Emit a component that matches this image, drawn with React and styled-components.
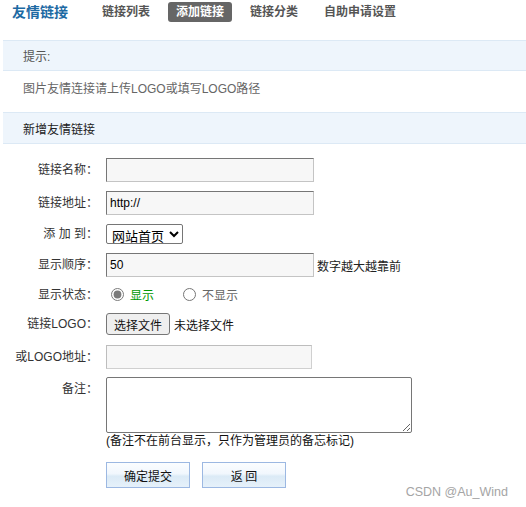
import React from "react";
import styled, { createGlobalStyle } from "styled-components";

const Global = createGlobalStyle`
  html, body { margin: 0; padding: 0; background: #fff; }
  body { font-family: "Liberation Sans", "Noto Sans CJK SC", sans-serif; font-size: 12px; color: #333; }
  * { box-sizing: border-box; }
`;

const Page = styled.div`
  position: relative;
  width: 526px;
  height: 507px;
  overflow: hidden;
`;

const Header = styled.div`
  display: flex;
  align-items: center;
  height: 24px;
  padding-left: 12px;
`;

const Title = styled.div`
  font-size: 14px;
  font-weight: bold;
  color: #1d6aa3;
  line-height: 20px;
  margin-right: 26px;
`;

const Tab = styled.div`
  height: 20px;
  line-height: 20px;
  padding: 0 8px;
  margin-right: 10px;
  border-radius: 3px;
  font-size: 12px;
  font-weight: bold;
  color: ${(p) => (p.$active ? "#fff" : "#555")};
  background: ${(p) => (p.$active ? "#666" : "transparent")};
`;

const Bar = styled.div`
  margin-left: 3px;
  margin-top: ${(p) => p.$mt || 0}px;
  height: ${(p) => p.$h}px;
  display: flex;
  align-items: center;
  padding-left: 20px;
  background: #eef5fc;
  border-top: 1px solid #dce9f5;
  border-bottom: 1px solid #dce9f5;
  color: ${(p) => p.$color || "#555"};
  font-size: 12px;
`;

const Hint = styled.div`
  height: 41px;
  padding: 11px 0 0 23px;
  line-height: 14px;
  color: #666;
  font-size: 12px;
`;

const Form = styled.form`
  display: flex;
  flex-direction: column;
  gap: 9px;
  margin-top: 14px;
`;

const Row = styled.div`
  display: flex;
  align-items: ${(p) => (p.$top ? "flex-start" : "center")};
  min-height: ${(p) => p.$h || 24}px;
`;

const Label = styled.div`
  width: 98px;
  flex: none;
  text-align: right;
  color: #333;
  font-size: 12px;
  line-height: 16px;
  padding-top: ${(p) => p.$pt || 0}px;
  margin-right: 8px;
  white-space: nowrap;
`;

const TextInput = styled.input`
  width: ${(p) => p.$w || 208}px;
  height: 24px;
  padding: 0 3px;
  font-family: "Liberation Sans", "Noto Sans CJK SC", sans-serif;
  font-size: 12px;
  color: #000;
  background: #f7f7f7;
  border: 1px solid;
  border-color: ${(p) => (p.$light ? "#bdbdbd #d0d0d0 #d0d0d0 #bdbdbd" : "#767676 #c4c4c4 #c4c4c4 #767676")};
  outline: none;
`;

const Select = styled.select`
  height: 20px;
  width: 77px;
  font-family: "Noto Sans CJK SC", sans-serif;
  font-size: 13px;
  color: #000;
  background: #fff;
  border: 1px solid #767676;
  border-radius: 2px;
  padding: 0 0 0 1px;
`;

const After = styled.span`
  margin-left: 3px;
  color: #222;
  font-size: 12px;
`;

const RadioLabel = styled.label`
  display: inline-flex;
  align-items: center;
  margin-right: ${(p) => p.$mr || 0}px;
  color: ${(p) => p.$color || "#666"};
  font-size: 12px;
  input {
    width: 13px;
    height: 13px;
    margin: 0 6px 0 5px;
    accent-color: #7a7a7a;
  }
`;

const FileBtn = styled.button`
  height: 22px;
  padding: 0 7px;
  font-family: "Noto Sans CJK SC", sans-serif;
  font-size: 12px;
  color: #111;
  background: #efefef;
  border: 1px solid #767676;
  border-radius: 3px;
`;

const FileNote = styled.span`
  margin-left: 4px;
  color: #111;
  font-size: 12px;
`;

const Column = styled.div`
  display: flex;
  flex-direction: column;
  margin-top: -1px;
`;

const TextArea = styled.textarea`
  width: 306px;
  height: 56px;
  border: 1px solid #767676;
  border-radius: 2px;
  resize: both;
  font-size: 12px;
`;

const Note = styled.div`
  margin-top: 1px;
  line-height: 14px;
  color: #111;
  font-size: 12px;
`;

const Buttons = styled.div`
  display: flex;
  gap: 12px;
  margin-left: 106px;
  margin-top: 5px;
`;

const Button = styled.button`
  width: 84px;
  height: 26px;
  font-family: "Noto Sans CJK SC", sans-serif;
  font-size: 12px;
  color: #111;
  border: 1px solid #9cb8e2;
  background: linear-gradient(#fbfdff 0%, #f1f7fd 45%, #dbeaf6 55%, #e6f1fa 100%);
  padding: 0;
`;

const Watermark = styled.div`
  position: absolute;
  right: 18px;
  bottom: 8px;
  font-family: "Liberation Sans", sans-serif;
  font-size: 12.5px;
  color: #a5a5a5;
`;

export default function App() {
  return (
    <Page>
      <Global />
      <Header>
        <Title>友情链接</Title>
        <Tab>链接列表</Tab>
        <Tab $active>添加链接</Tab>
        <Tab>链接分类</Tab>
        <Tab>自助申请设置</Tab>
      </Header>
      <Bar $mt={16} $h={31}>提示:</Bar>
      <Hint>图片友情连接请上传LOGO或填写LOGO路径</Hint>
      <Bar $h={32} $color="#222">新增友情链接</Bar>
      <Form onSubmit={(e) => e.preventDefault()}>
        <Row>
          <Label>链接名称：</Label>
          <TextInput />
        </Row>
        <Row>
          <Label>链接地址：</Label>
          <TextInput defaultValue="http://" />
        </Row>
        <Row $h={19}>
          <Label>添 加 到：</Label>
          <Select defaultValue="home">
            <option value="home">网站首页</option>
          </Select>
        </Row>
        <Row>
          <Label>显示顺序：</Label>
          <TextInput defaultValue="50" />
          <After>数字越大越靠前</After>
        </Row>
        <Row $h={17}>
          <Label>显示状态：</Label>
          <RadioLabel $color="#090" $mr={24}>
            <input type="radio" name="show" defaultChecked />
            显示
          </RadioLabel>
          <RadioLabel>
            <input type="radio" name="show" />
            不显示
          </RadioLabel>
        </Row>
        <Row>
          <Label>链接LOGO：</Label>
          <FileBtn type="button">选择文件</FileBtn>
          <FileNote>未选择文件</FileNote>
        </Row>
        <Row>
          <Label>或LOGO地址：</Label>
          <TextInput $light $w={206} />
        </Row>
        <Row $top>
          <Label $pt={3}>备注：</Label>
          <Column>
            <TextArea />
            <Note>(备注不在前台显示，只作为管理员的备忘标记)</Note>
          </Column>
        </Row>
        <Buttons>
          <Button type="submit">确定提交</Button>
          <Button type="button">返 回</Button>
        </Buttons>
      </Form>
      <Watermark>CSDN @Au_Wind</Watermark>
    </Page>
  );
}
